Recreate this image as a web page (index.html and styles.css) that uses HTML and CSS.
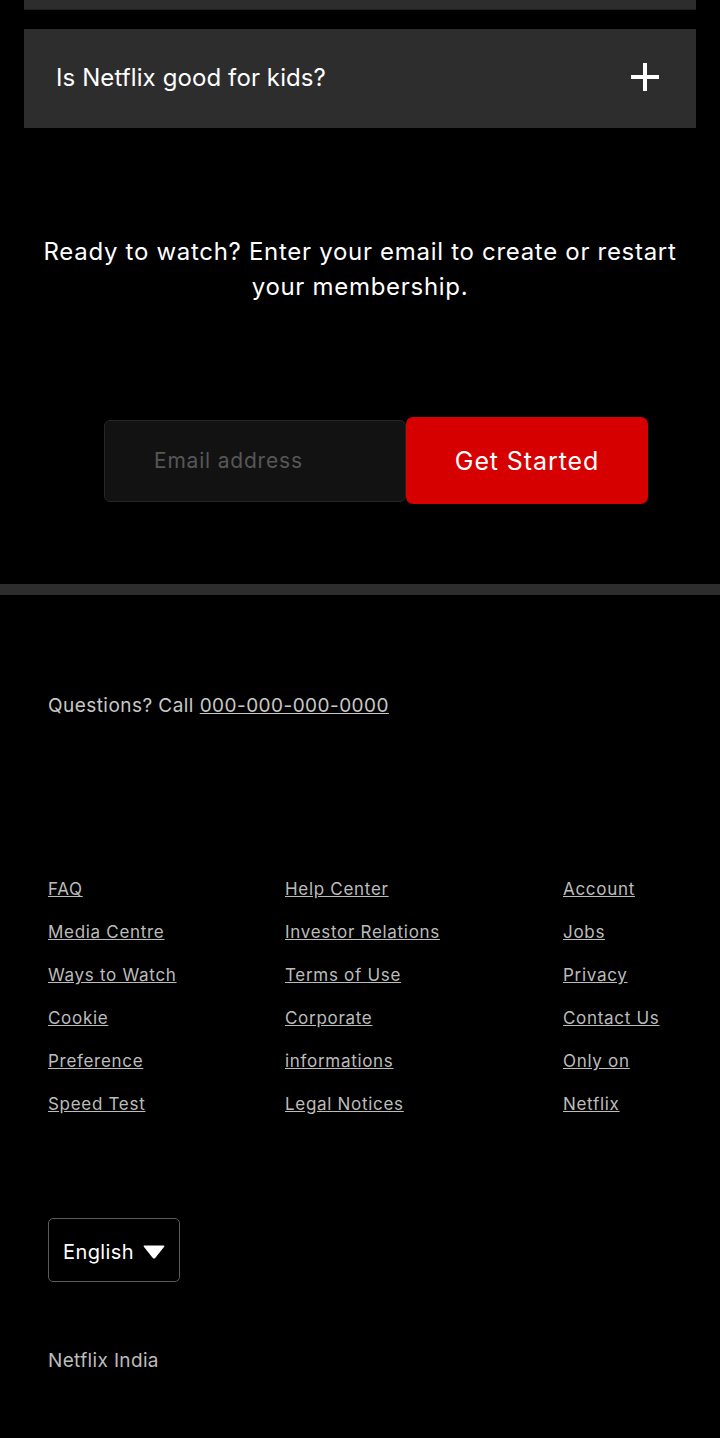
FILE: index.html
```html
<!DOCTYPE html>
<html lang="en">
<head>
<meta charset="utf-8">
<title>Netflix India</title>
<link rel="stylesheet" href="styles.css">
</head>
<body>
<main class="page">
  <section class="faq">
    <div class="faq-prev"></div>
    <button class="faq-item" type="button">
      <span class="faq-q">Is Netflix good for kids?</span>
      <svg class="faq-plus" width="28" height="28" viewBox="0 0 28 28" aria-hidden="true">
        <rect x="12" y="0" width="4" height="28" fill="#fff"/>
        <rect x="0" y="12" width="28" height="4" fill="#fff"/>
      </svg>
    </button>
  </section>

  <section class="cta">
    <h3 class="cta-title">Ready to watch? Enter your email to create or restart your membership.</h3>
    <form class="cta-form">
      <div class="cta-input">Email address</div>
      <button class="cta-btn" type="button">Get Started</button>
    </form>
  </section>

  <div class="divider"></div>

  <footer class="footer">
    <p class="footer-call">Questions? Call <a href="#">000-000-000-0000</a></p>
    <div class="footer-links">
      <ul class="col col-1">
        <li><a href="#">FAQ</a></li>
        <li><a href="#">Media Centre</a></li>
        <li><a href="#">Ways to Watch</a></li>
        <li><a href="#">Cookie</a></li>
        <li><a href="#">Preference</a></li>
        <li><a href="#">Speed Test</a></li>
      </ul>
      <ul class="col col-2">
        <li><a href="#">Help Center</a></li>
        <li><a href="#">Investor Relations</a></li>
        <li><a href="#">Terms of Use</a></li>
        <li><a href="#">Corporate</a></li>
        <li><a href="#">informations</a></li>
        <li><a href="#">Legal Notices</a></li>
      </ul>
      <ul class="col col-3">
        <li><a href="#">Account</a></li>
        <li><a href="#">Jobs</a></li>
        <li><a href="#">Privacy</a></li>
        <li><a href="#">Contact Us</a></li>
        <li><a href="#">Only on</a></li>
        <li><a href="#">Netflix</a></li>
      </ul>
    </div>
    <div class="lang">
      <span>English</span>
      <svg class="caret" width="22" height="14" viewBox="0 0 22 14" aria-hidden="true">
        <path d="M1.5 0.5 H20.5 Q22 0.5 21 2 L12.2 13 Q11 14.2 9.8 13 L1 2 Q0 0.5 1.5 0.5 Z" fill="#fff"/>
      </svg>
    </div>
    <p class="footer-country">Netflix India</p>
  </footer>
</main>
</body>
</html>
```

FILE: styles.css
```css
* { box-sizing: border-box; }
html, body { margin: 0; padding: 0; background: #000; }
body {
  font-family: Inter, Roboto, "Noto Sans", "Liberation Sans", sans-serif;
  color: #fff;
}
.page { width: 720px; min-height: 1438px; }

.faq { padding: 0 24px; }
.faq-prev { height: 10px; background: #2d2d2d; border-bottom: 1px solid #1f1f1f; }
.faq-item {
  margin-top: 19px;
  width: 100%;
  height: 99px;
  display: flex;
  align-items: center;
  justify-content: space-between;
  padding: 0 37px 0 32px;
  background: #2d2d2d;
  border: 0;
  color: #fff;
  font-family: inherit;
  font-size: 24px;
  letter-spacing: 0.1px;
  text-align: left;
}
.faq-q { line-height: 30px; margin-top: -2px; }
.faq-plus { display: block; margin-top: -3px; }

.cta { padding-top: 106px; }
.cta-title {
  margin: 0 auto;
  max-width: 650px;
  font-size: 24px;
  font-weight: 400;
  letter-spacing: 0.7px;
  line-height: 35px;
  text-align: center;
}
.cta-form {
  margin: 113px 0 0 104px;
  display: flex;
  align-items: center;
}
.cta-input {
  width: 302px;
  height: 82px;
  padding-left: 49px;
  display: flex;
  align-items: center;
  background: #121212;
  border: 1px solid #262626;
  border-radius: 6px;
  color: #575757;
  font-size: 21px;
  letter-spacing: 0.8px;
}
.cta-btn {
  width: 242px;
  height: 87px;
  background: #d60000;
  border: 0;
  border-radius: 7px;
  color: #fff;
  font-family: inherit;
  font-size: 25px;
  letter-spacing: 0.9px;
}

.divider { margin-top: 80px; height: 11px; background: #2d2d2d; }

.footer { padding: 0 48px; color: #bcbcbc; }
.footer a { color: inherit; text-decoration: underline; }
.footer-call {
  margin: 99px 0 0;
  font-size: 19px;
  letter-spacing: 0.45px;
  line-height: 24px;
  color: #c8c8c8;
}
.footer-links {
  margin-top: 159px;
  display: flex;
}
.col { list-style: none; margin: 0; padding: 0; }
.col li { font-size: 17px; letter-spacing: 0.7px; line-height: 24px; margin-bottom: 19px; }
.col li:last-child { margin-bottom: 0; }
.col-1 { width: 237px; }
.col-2 { width: 278px; }

.lang {
  margin-top: 102px;
  width: 132px;
  height: 64px;
  display: flex;
  align-items: center;
  gap: 9px;
  padding: 3px 0 0 14px;
  border: 1px solid #5a5a5a;
  border-radius: 5px;
  color: #fff;
  font-size: 20px;
  letter-spacing: 0.4px;
}
.caret { display: block; }
.footer-country {
  margin: 67px 0 0;
  font-size: 19px;
  letter-spacing: 0.35px;
  line-height: 24px;
  color: #bcbcbc;
}
```
